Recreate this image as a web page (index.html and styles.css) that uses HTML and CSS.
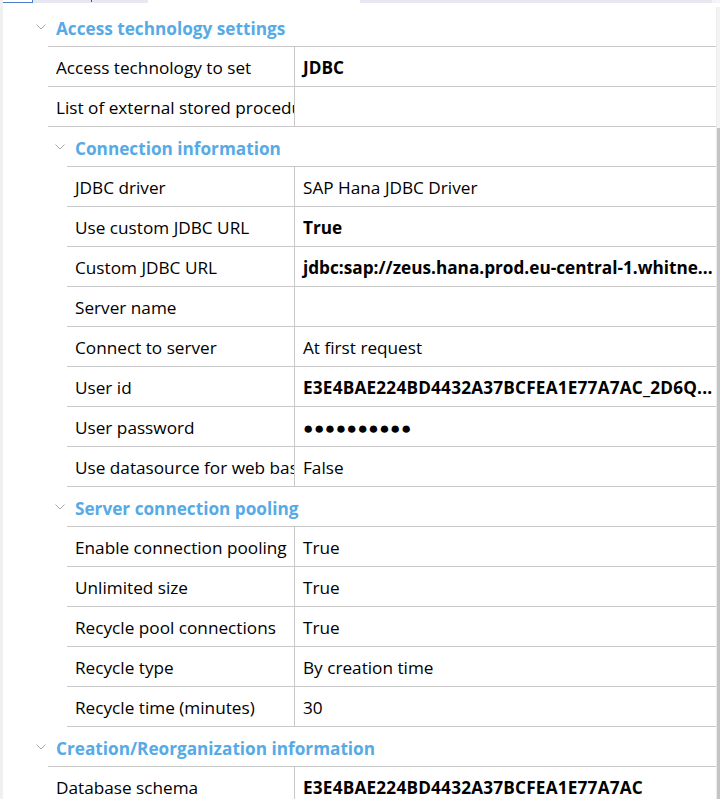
FILE: index.html
```html
<!DOCTYPE html>
<html lang="en">
<head>
<meta charset="utf-8">
<title>Properties</title>
<link rel="stylesheet" href="styles.css">
</head>
<body>
<div class="window">
  <div class="tabstrip">
    <span class="tab tab-active"></span>
    <span class="tab tab-second"><span class="tick"></span></span>
    <span class="tab tab-third"></span>
    <span class="tab tab-rest"></span>
  </div>
  <div class="content">
    <div class="grid">
      <div class="group d0"><svg class="chev" width="10" height="6" viewBox="0 0 10 6"><path d="M0.5 0.5 L5 5 L9.5 0.5" /></svg><span>Access technology settings</span></div>
      <div class="row d0"><div class="label">Access technology to set</div><div class="value strong">JDBC</div></div>
      <div class="row d0"><div class="label">List of external stored procedures</div><div class="value"></div></div>

      <div class="group d1"><svg class="chev" width="10" height="6" viewBox="0 0 10 6"><path d="M0.5 0.5 L5 5 L9.5 0.5" /></svg><span>Connection information</span></div>
      <div class="row d1"><div class="label">JDBC driver</div><div class="value">SAP Hana JDBC Driver</div></div>
      <div class="row d1"><div class="label">Use custom JDBC URL</div><div class="value strong">True</div></div>
      <div class="row d1"><div class="label">Custom JDBC URL</div><div class="value strong">jdbc:sap://zeus.hana.prod.eu-central-1.whitne...</div></div>
      <div class="row d1"><div class="label">Server name</div><div class="value"></div></div>
      <div class="row d1"><div class="label">Connect to server</div><div class="value">At first request</div></div>
      <div class="row d1"><div class="label">User id</div><div class="value strong wide">E3E4BAE224BD4432A37BCFEA1E77A7AC_2D6Q...</div></div>
      <div class="row d1"><div class="label">User password</div><div class="value strong dots">●●●●●●●●●●</div></div>
      <div class="row d1"><div class="label">Use datasource for web based applications</div><div class="value">False</div></div>

      <div class="group d1"><svg class="chev" width="10" height="6" viewBox="0 0 10 6"><path d="M0.5 0.5 L5 5 L9.5 0.5" /></svg><span>Server connection pooling</span></div>
      <div class="row d1"><div class="label">Enable connection pooling</div><div class="value">True</div></div>
      <div class="row d1"><div class="label">Unlimited size</div><div class="value">True</div></div>
      <div class="row d1"><div class="label">Recycle pool connections</div><div class="value">True</div></div>
      <div class="row d1"><div class="label">Recycle type</div><div class="value">By creation time</div></div>
      <div class="row d1"><div class="label">Recycle time (minutes)</div><div class="value">30</div></div>

      <div class="group d0"><svg class="chev" width="10" height="6" viewBox="0 0 10 6"><path d="M0.5 0.5 L5 5 L9.5 0.5" /></svg><span>Creation/Reorganization information</span></div>
      <div class="row d0"><div class="label">Database schema</div><div class="value strong wide">E3E4BAE224BD4432A37BCFEA1E77A7AC</div></div>
    </div>
    <div class="scrollbar"><div class="thumb"></div></div>
  </div>
</div>
</body>
</html>
```

FILE: styles.css
```css
* { box-sizing: border-box; }
html, body { margin: 0; padding: 0; background: #fff; }
body {
  font-family: "Open Sans", "Noto Sans", sans-serif;
  font-size: 17.2px;
  color: #000;
  overflow: hidden;
}
.window {
  width: 720px;
  height: 799px;
  display: flex;
  flex-direction: column;
  border-left: 3px solid #f0f0f0;
  overflow: hidden;
}
.tabstrip {
  display: flex;
  height: 3px;
  flex: none;
}
.tab { display: block; height: 3px; }
.tab-active {
  width: 30px;
  background: #fff;
  border-right: 1px solid #4a7fc8;
  border-bottom: 1px solid #4a7fc8;
}
.tab-second { width: 115px; background: #e8e8f2; position: relative; }
.tick { position: absolute; left: 58px; top: 0; width: 1px; height: 2px; background: #555; }
.tab-third { width: 212px; background: #fff; }
.tab-rest { flex: 1; background: #e8e8f2; border-right: 8px solid #f3f3f8; }
.content {
  flex: 1;
  display: flex;
  padding-top: 4px;
  min-height: 0;
}
.grid {
  width: 714px;
  display: flex;
  flex-direction: column;
}
.group, .row {
  height: 40px;
  flex: none;
  border-bottom: 1px solid #c8c8c8;
  display: flex;
  align-items: center;
}
.group { padding-top: 3px; }
.d0 { margin-left: 45px; }
.d1 { margin-left: 64px; }
.group span {
  color: #56aae6;
  font-weight: 700;
  white-space: nowrap;
}
.chev {
  flex: none;
  margin-left: -12px;
  margin-right: 10px;
  margin-top: -2px;
}
.chev path { fill: none; stroke: #a8a8a8; stroke-width: 1; }
.row { align-items: stretch; }
.label {
  flex: none;
  padding-left: 8px;
  padding-top: 2px;
  border-right: 1px solid #c8c8c8;
  white-space: nowrap;
  overflow: hidden;
  display: flex;
  align-items: center;
}
.d0 .label { width: 247px; }
.d1 .label { width: 228px; }
.value {
  flex: 1;
  min-width: 0;
  padding-left: 8px;
  padding-top: 2px;
  white-space: nowrap;
  overflow: hidden;
  text-overflow: ellipsis;
  line-height: 37px;
}
.strong { font-weight: 700; }
.wide { letter-spacing: 0.2px; }
.dots { letter-spacing: 0.5px; }
.scrollbar {
  width: 3px;
  flex: none;
  border-left: 1px solid #ececec;
  box-sizing: content-box;
  background: #f3f3f3;
  display: flex;
  flex-direction: column;
  padding-top: 121px;
}
.thumb { flex: 1; width: 3px; background: #c4c4c4; }
```
